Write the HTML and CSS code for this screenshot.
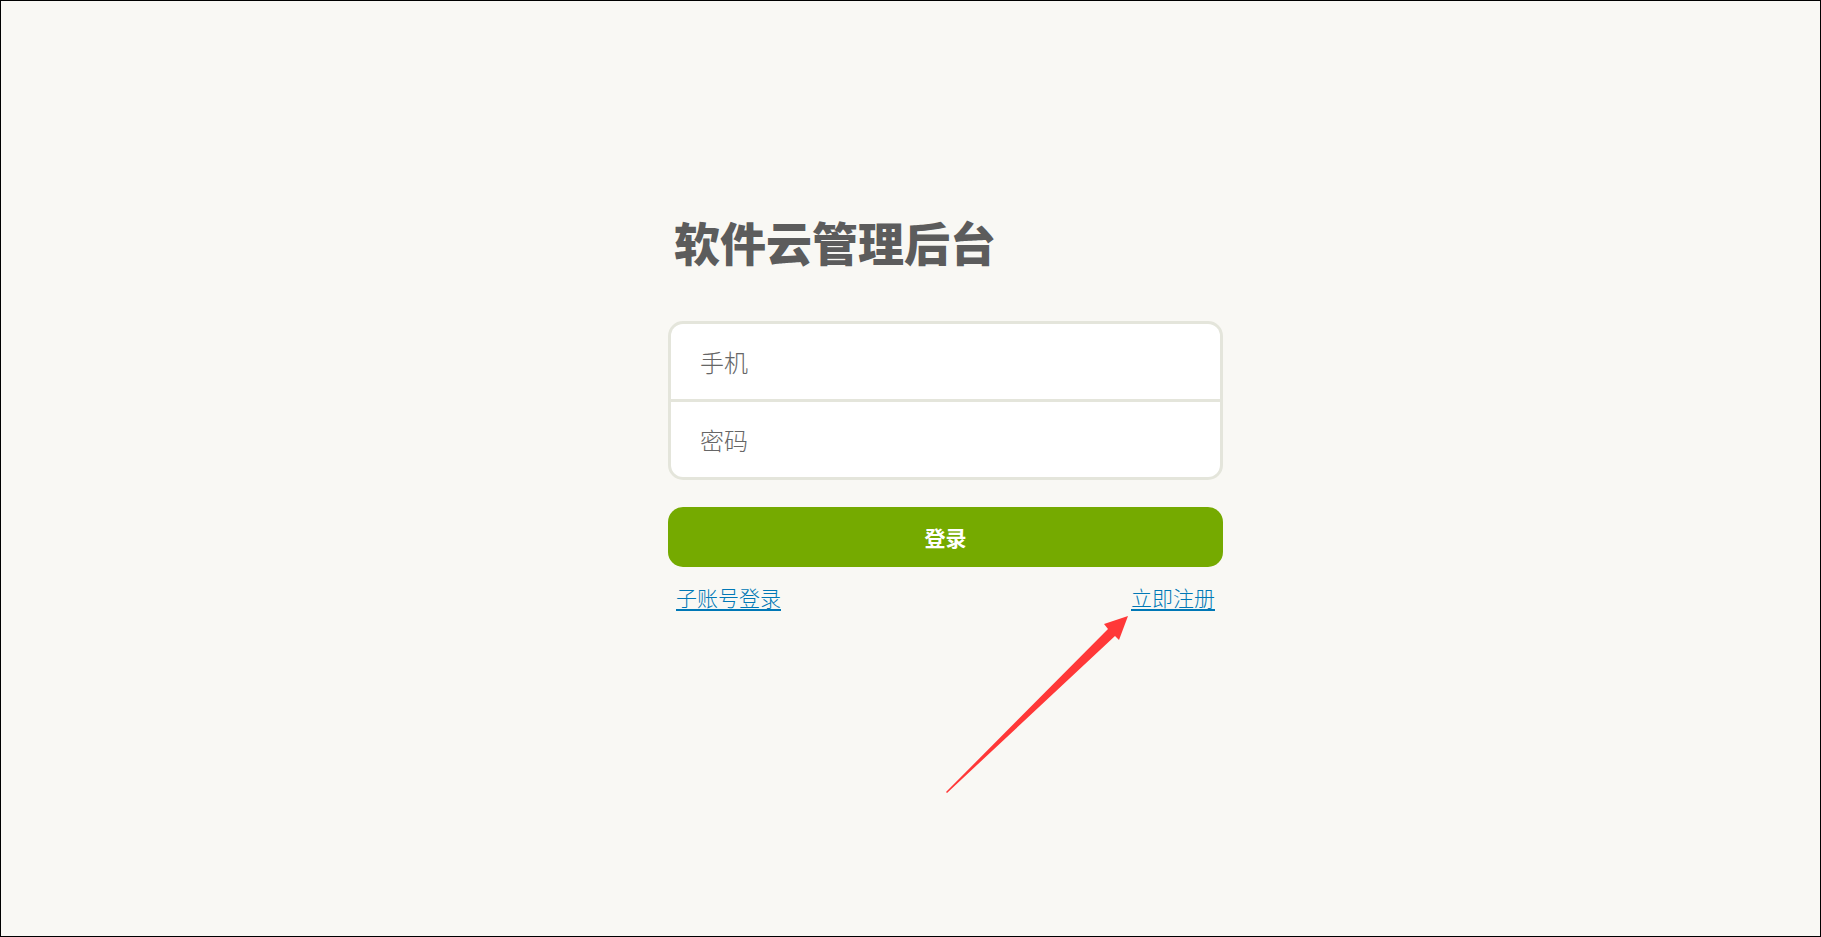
FILE: index.html
```html
<!DOCTYPE html>
<html lang="zh-CN">
<head>
    <meta charset="UTF-8">
    <meta name="viewport" content="width=device-width, initial-scale=1.0">
    <title>软件云管理后台</title>
    <link rel="stylesheet" href="styles.css">
</head>
<body>
    <main class="container">
        <h1>软件云管理后台</h1>
        <form id="loginForm">
            <div class="fields">
                <input type="text" id="phone" placeholder="手机" aria-label="手机">
                <input type="password" id="password" placeholder="密码" aria-label="密码">
            </div>
            <button type="submit">登录</button>
        </form>
        <div class="links">
            <a href="#sub">子账号登录</a>
            <a href="#register">立即注册</a>
            <svg class="arrow" width="182" height="177" viewBox="0 0 182 177" aria-hidden="true">
                <path fill="#ff3838" d="M182 0 L173 24 L169 20 L1 177 L0 176 L162 13 L158 8 Z"/>
            </svg>
        </div>
    </main>
</body>
</html>
```

FILE: styles.css
```css
* {
    box-sizing: border-box;
}
body {
    margin: 0;
    min-height: 100vh;
    padding: 200px 20px 20px 90px;
    border: 1px solid #000;
    background-color: #f9f8f4;
    font-family: "Noto Sans CJK SC", sans-serif;
}
.container {
    max-width: 555px;
    margin: 0 auto;
}
h1 {
    margin: 0;
    padding: 6px;
    color: #5c5c5c;
    font-size: 46px;
    font-weight: 900;
    line-height: 68px;
}
form {
    display: flex;
    flex-direction: column;
    gap: 27px;
    margin-top: 40px;
}
.fields {
    display: flex;
    flex-direction: column;
    gap: 3px;
    border: 3px solid #e4e5db;
    border-radius: 15px;
    background-color: #e4e5db;
    overflow: hidden;
}
input {
    width: 100%;
    height: 75px;
    padding: 0 29px;
    border: none;
    background-color: #fff;
    color: #333;
    font-family: inherit;
    font-size: 24px;
    font-weight: 300;
}
input::placeholder {
    color: #666;
}
button {
    height: 60px;
    border: none;
    border-radius: 15px;
    background-color: #75aa00;
    color: #fff;
    font-family: inherit;
    font-size: 21px;
    font-weight: bold;
    cursor: pointer;
}
.links {
    position: relative;
    display: flex;
    justify-content: space-between;
    margin-top: 14px;
    padding: 0 8px;
}
.links a {
    color: #0078b6;
    font-size: 21px;
    font-weight: 300;
    line-height: 32px;
    text-decoration-thickness: 2px;
    text-underline-offset: 3px;
}
/* pointer to the register link */
.arrow {
    position: absolute;
    top: 35px;
    right: 95px;
}
```
